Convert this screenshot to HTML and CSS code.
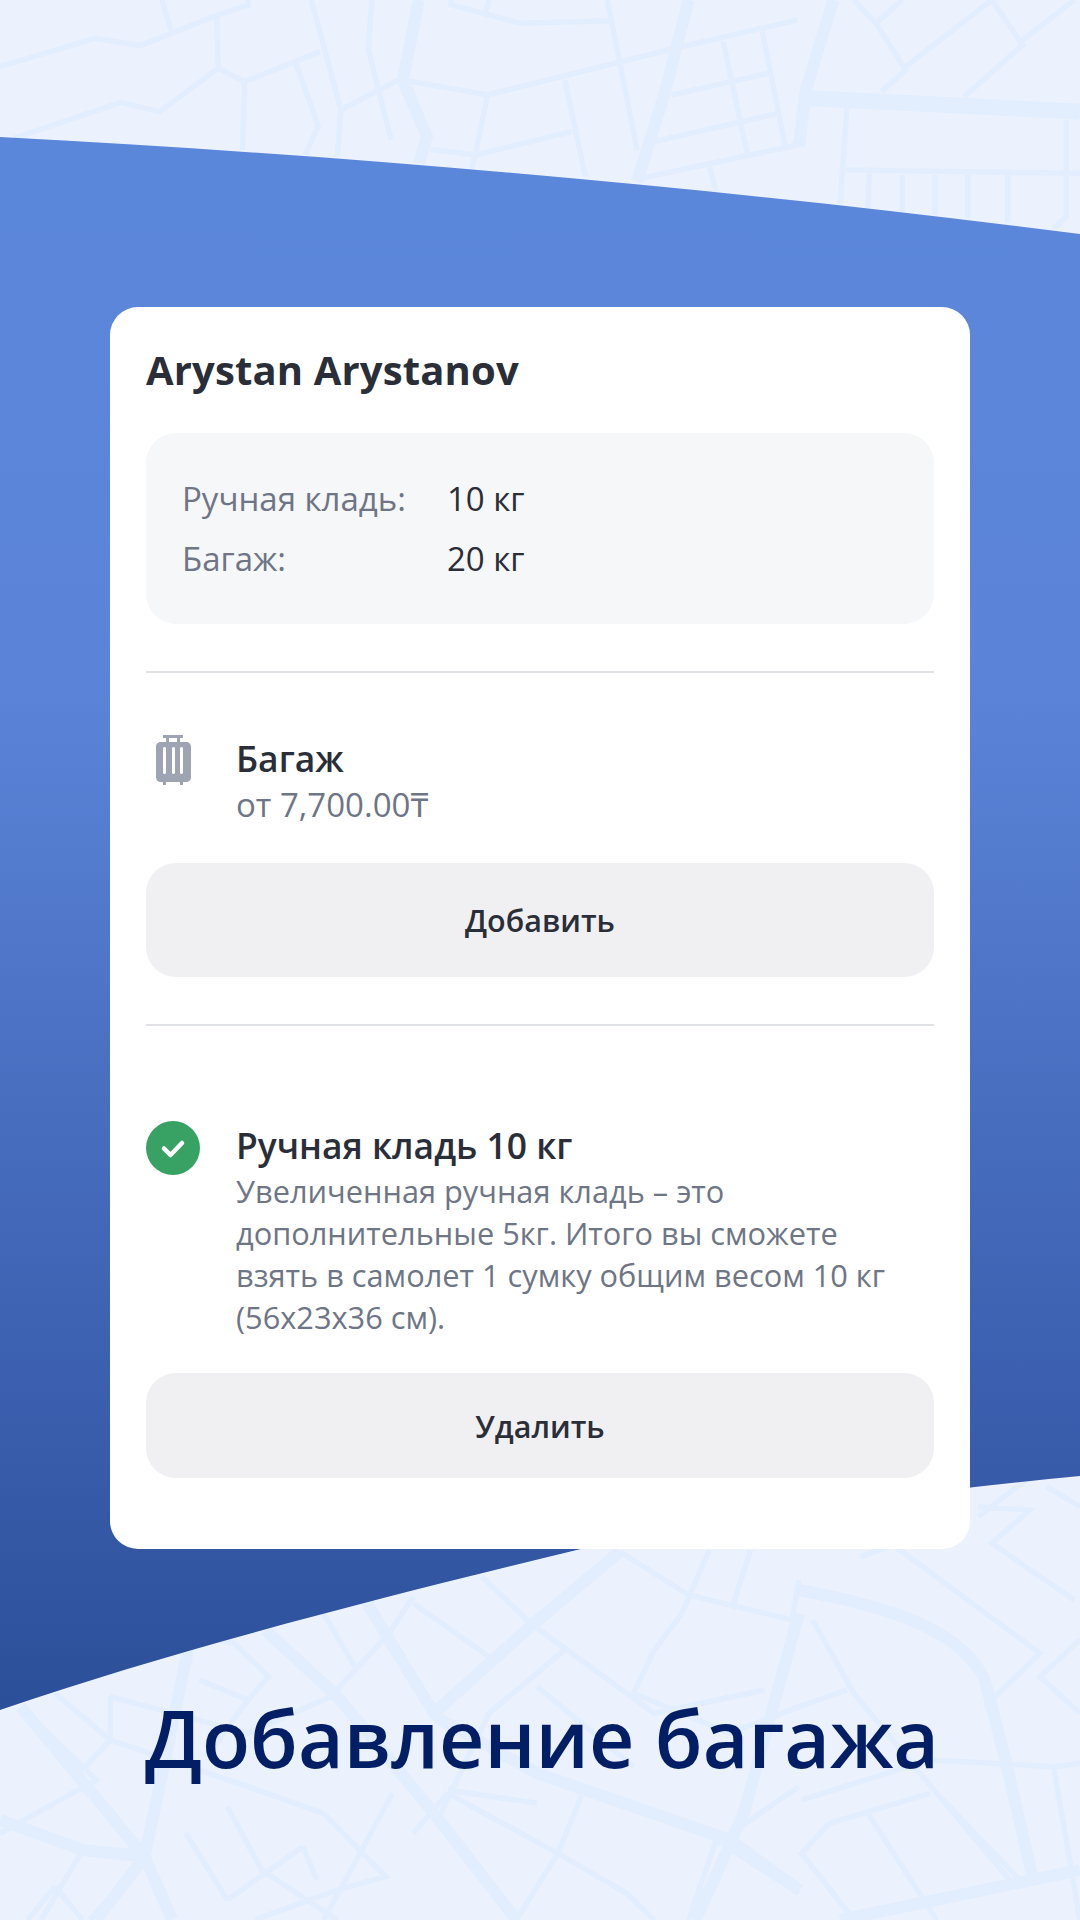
FILE: index.html
```html
<!DOCTYPE html>
<html lang="ru">

<head>
    <meta charset="UTF-8">
    <title>Добавление багажа</title>
    <link rel="stylesheet" href="styles.css">
</head>

<body>
    <div class="screen">
        <svg class="backdrop" viewBox="0 0 1080 1920" xmlns="http://www.w3.org/2000/svg">
            <defs>
                <linearGradient id="blue" x1="0" y1="0" x2="0" y2="1">
                    <stop offset="0" stop-color="#5b87da" />
                    <stop offset="0.35" stop-color="#5b84d8" />
                    <stop offset="0.7" stop-color="#4267b8" />
                    <stop offset="1" stop-color="#2c4f99" />
                </linearGradient>
            </defs>

            <!-- map lines, top -->
            <g class="roads" transform="scale(0.6887 0.3333)">
                <path d="M0 200 138 115 204 137 310 50 360 15V0M235 0 248 90M315 50 317 205 355 245 465 155M317 205 232 335 175 308 20 415M355 245 352 450M430 190 462 378 443 465M452 0 495 330 490 470M495 330 578 240M540 0 535 150 568 420M585 240 708 285 970 150 1158 60M708 285 690 465 830 395M690 465 625 448M690 465 685 505M820 240 850 530M655 0V15L757 70 885 62M710 0 705 35M882 0 925 450M1050 125 1085 460M1107 95 1140 435M975 285 1115 220M950 425 1130 340M930 535 1158 435M1030 500 1040 575M1240 0 1272 70 1315 210 1280 275M1440 0 1315 200M1440 0 1485 135 1400 290M1560 0 1485 120M1272 70 1310 0M1230 320 1220 610M1228 510 1568 520M1262 520 1260 625M1310 525V635M1358 525V645M1405 525V655M1463 525V670M1548 360V650L1530 685" />
                <path class="wide" d="M608 0 585 240 620 410 608 490M1000 0 965 280 925 545M1210 0 1170 270 1160 440" />
                <path class="widest" d="M1175 295 1568 335" />
            </g>

            <!-- map lines, bottom -->
            <g class="roads" transform="translate(0 1480) scale(0.6887 0.3333)">
                <path d="M900 215 1000 345 1150 420 1160 300M1030 210 990 400 950 510 920 640M1090 210 1065 370M1300 200 1510 520 1430 680M1180 420 1240 640 1360 940 1490 1220M1420 80 1495 90 1440 190 1560 360M1490 0 1420 110M1250 230 1290 200M1520 20 1568 80M1568 480 1510 590 1568 700M1160 680 1230 630M1164 960 1350 840 1530 860 1568 850M1204 1030 1164 1120 1240 1320M1204 1030 1350 940M1260 1000 1360 1320M1530 860 1568 1320M1360 940 1470 1210M700 290 770 430 950 700 1110 630M820 510 710 700 640 1000M780 620 920 860M920 640 1060 760 1160 680M600 350 565 460 480 650M600 370 710 530M470 400 515 560M290 600 360 660 390 590 340 490 290 470M360 660 300 830M160 650 360 760 480 650M30 680 140 900 0 1060M80 640 160 780 115 880M160 650 160 780 360 920 470 1000M0 1020 120 1110 210 1140M330 980 380 1170 490 1320M270 1060 330 1260M120 1110 60 1320M470 1000 560 1190 490 1230 370 1320M570 940 470 1320M650 940 810 1120 910 1240 950 1320M850 920 810 1120 750 1320M1000 1320 1040 1080 1160 1240M1040 1090 1160 920" />
                <path d="M650 930 780 970M650 940 600 1060M440 1100 460 1200M440 1100 330 1260M80 1220 40 1320M80 1220 120 1320M210 1140 130 1320" />
                <path class="wide" d="M385 450 490 650 630 1000 750 1320M530 360 630 700 640 720M900 215 770 440 630 700M0 1020 120 1110 210 1130 250 1320M275 490 210 1130 140 1320M30 680 210 1130M640 720 780 880 1060 1080 1160 1230M1160 330C1320 390 1400 470 1430 600L1460 840 1500 1200M1160 400 1080 1000 1010 1320M1568 1170 1220 1320" />
            </g>

            <path fill="url(#blue)" d="M0 137C360 156 720 188 1080 234V1476C940 1489 740 1515 585 1548 400 1593 190 1645 0 1710Z" />
        </svg>

        <main class="card">
            <h2 class="name">Arystan Arystanov</h2>

            <div class="allowance">
                <div class="allowance-row">
                    <span class="allowance-label">Ручная кладь:</span>
                    <span class="allowance-value">10 кг</span>
                </div>
                <div class="allowance-row">
                    <span class="allowance-label">Багаж:</span>
                    <span class="allowance-value">20 кг</span>
                </div>
            </div>

            <hr class="divider">

            <section class="option option-baggage">
                <svg class="option-icon" width="54" height="54" viewBox="0 0 54 54" xmlns="http://www.w3.org/2000/svg">
                    <path fill="#9ea4b2" fill-rule="evenodd" d="M17 0H37V3H34V7H40C43 7 45 9 45 12V42C45 45 43 47 40 47H37V50H34V47H20V50H17V47H15C12 47 10 45 10 42V12C10 9 12 7 15 7H20V3H17ZM23 3V7H31V3ZM18.500 12C17.700 12 17 12.700 17 13.500V37.500C17 38.300 17.700 39 18.500 39S20 38.300 20 37.500V13.500C20 12.700 19.300 12 18.500 12ZM27.500 12C26.700 12 26 12.700 26 13.500V37.500C26 38.300 26.700 39 27.500 39S29 38.300 29 37.500V13.500C29 12.700 28.300 12 27.500 12ZM35.500 12C34.700 12 34 12.700 34 13.500V37.500C34 38.300 34.700 39 35.500 39S37 38.300 37 37.500V13.500C37 12.700 36.300 12 35.500 12Z" />
                </svg>
                <div class="option-text">
                    <div class="option-title">Багаж</div>
                    <div class="option-desc">от 7,700.00₸</div>
                </div>
            </section>
            <button type="button" class="action action-add">Добавить</button>

            <hr class="divider">

            <section class="option option-carryon">
                <svg class="option-icon" width="54" height="54" viewBox="0 0 54 54" xmlns="http://www.w3.org/2000/svg">
                    <circle cx="27" cy="27" r="27" fill="#37a264" />
                    <path d="M18 27.500 24.500 34 36 22" fill="none" stroke="#fff" stroke-width="4.500" stroke-linecap="round" stroke-linejoin="round" />
                </svg>
                <div class="option-text">
                    <div class="option-title">Ручная кладь 10 кг</div>
                    <div class="option-desc">Увеличенная ручная кладь – это<br>дополнительные 5кг. Итого вы сможете<br>взять в самолет 1 сумку общим весом 10 кг<br>(56х23х36 см).</div>
                </div>
            </section>
            <button type="button" class="action action-remove">Удалить</button>
        </main>

        <h1 class="headline">Добавление багажа</h1>
    </div>
</body>

</html>
```

FILE: styles.css
```css
body {
    margin: 0;
    font-family: 'Open Sans', 'Noto Sans', sans-serif;
    color: #2a2e38;
}

.screen {
    position: relative;
    width: 1080px;
    height: 1920px;
    padding-top: 307px;
    box-sizing: border-box;
    overflow: hidden;
    background: #ebf2fe;
}

.backdrop {
    position: absolute;
    top: 0;
    left: 0;
    width: 1080px;
    height: 1920px;
}

.roads path {
    fill: none;
    stroke: #e2edfd;
    stroke-width: 5.500px;
    vector-effect: non-scaling-stroke;
}

.roads .wide {
    stroke-width: 12px;
}

.roads .widest {
    stroke-width: 16px;
}

.card {
    position: relative;
    width: 860px;
    height: 1242px;
    margin-left: 110px;
    padding: 0 36px;
    box-sizing: border-box;
    background: #fff;
    border-radius: 28px;
}

.name {
    margin: 0;
    padding-top: 37px;
    font-size: 40px;
    line-height: 52px;
    font-weight: 700;
    letter-spacing: 0.15px;
}

.allowance {
    margin-top: 37px;
    height: 191px;
    padding: 36px 36px 0;
    box-sizing: border-box;
    background: #f6f7f9;
    border-radius: 30px;
    font-size: 33px;
}

.allowance-row {
    display: flex;
    height: 60px;
    line-height: 60px;
}

.allowance-label {
    width: 265px;
    color: #6e7585;
}

.divider {
    height: 2px;
    margin: 47px 0 0;
    border: 0;
    background: #e0e2e6;
}

.option {
    display: flex;
    gap: 36px;
}

.option-baggage {
    margin-top: 62px;
}

.option-carryon {
    margin-top: 95px;
}

.option-icon {
    flex: none;
}

.option-title {
    font-size: 35.400px;
    line-height: 49px;
    font-weight: 600;
}

.option-desc {
    font-size: 30.750px;
    line-height: 42px;
    color: #6e7585;
}

.option-baggage .option-title {
    line-height: 47px;
}

.option-baggage .option-desc {
    font-size: 33px;
    line-height: 46px;
}

.action {
    display: block;
    width: 100%;
    border: 0;
    border-radius: 30px;
    background: #f0f0f2;
    color: #2a2e38;
    font-family: inherit;
    font-size: 30.500px;
    font-weight: 600;
}

.action-add {
    height: 114px;
    margin-top: 35px;
}

.action-remove {
    height: 105px;
    margin-top: 35px;
}

.headline {
    position: relative;
    margin: 0;
    padding: 132px 0 0 4px;
    font-size: 78.800px;
    line-height: 114px;
    font-weight: 600;
    text-align: center;
    color: #021e64;
}
```
